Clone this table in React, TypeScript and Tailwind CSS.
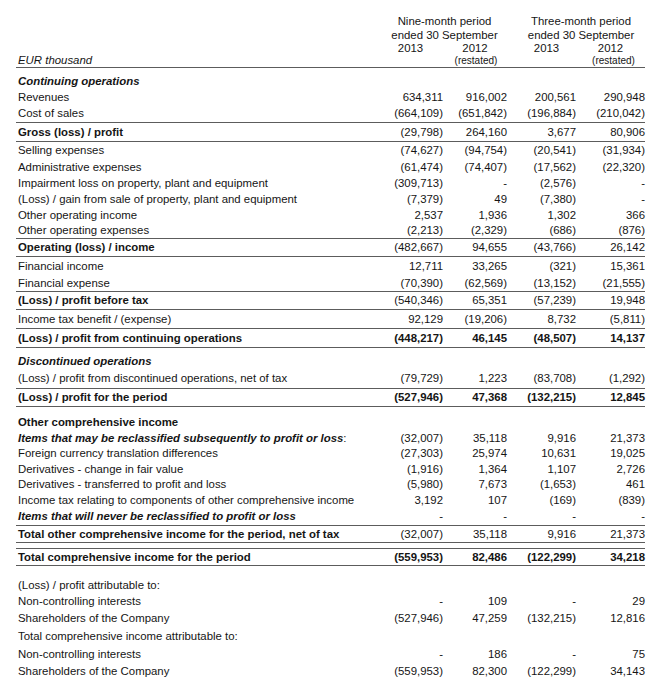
import React from "react";

const cols = ["w-[65px]", "w-[64px]", "w-[69px]", "w-[69px]"];

type RowProps = {
  label?: React.ReactNode;
  v?: string[];
  h: string;
  b?: boolean;
  lb?: string;
  nb?: boolean;
  mt?: string;
};

function Row({ label, v, h, b, lb, nb, mt }: RowProps) {
  return (
    <div
      className={[
        "flex items-center",
        h,
        b ? "border-b border-[#5c5c5c]" : "",
        mt ?? "",
      ].join(" ")}
    >
      <div className={["flex-1 pl-[2px] whitespace-nowrap", lb ?? ""].join(" ")}>{label}</div>
      {v &&
        v.map((x, i) => (
          <div
            key={i}
            className={[cols[i], "text-right whitespace-nowrap", nb ? "font-bold" : ""].join(" ")}
          >
            {x}
          </div>
        ))}
    </div>
  );
}

export default function App() {
  return (
    <div className="w-[652px] h-[683px] bg-white overflow-hidden text-[#151515] font-['Liberation_Sans',Arial,sans-serif] text-[11.4px] leading-[13px]">
      <div className="ml-[16px] w-[629px]">
        {/* Header */}
        <div className="flex h-[68px] border-b border-[#5c5c5c] pt-[14px]">
          <div className="flex-1 pl-[2px] flex items-end italic">EUR thousand</div>
          <div className="w-[129px] flex flex-col items-center">
            <div className="h-[14px] leading-[14px] pl-[4px]">Nine-month period</div>
            <div className="h-[14px] leading-[14px] pl-[4px]">ended 30 September</div>
            <div className="flex w-full h-[13px] leading-[13px]">
              <div className="w-[65px] text-center">2013</div>
              <div className="w-[64px] text-center">2012</div>
            </div>
            <div className="flex w-full h-[12px] leading-[12px]">
              <div className="w-[65px]"></div>
              <div className="w-[64px] text-center text-[10px] pl-[2px]">(restated)</div>
            </div>
          </div>
          <div className="w-[138px] flex flex-col items-center">
            <div className="h-[14px] leading-[14px] pl-[10px]">Three-month period</div>
            <div className="h-[14px] leading-[14px] pl-[10px]">ended 30 September</div>
            <div className="flex w-full h-[13px] leading-[13px]">
              <div className="w-[69px] text-center pl-[10px]">2013</div>
              <div className="w-[69px] text-center">2012</div>
            </div>
            <div className="flex w-full h-[12px] leading-[12px]">
              <div className="w-[69px]"></div>
              <div className="w-[69px] text-center text-[10px] pl-[6px]">(restated)</div>
            </div>
          </div>
        </div>

        <Row mt="mt-[5px]" h="h-[16px]" label="Continuing operations" lb="font-bold italic" />
        <Row h="h-[16px]" label="Revenues" v={["634,311", "916,002", "200,561", "290,948"]} />
        <Row h="h-[18px]" b label="Cost of sales" v={["(664,109)", "(651,842)", "(196,884)", "(210,042)"]} />
        <Row h="h-[19px]" b label="Gross (loss) / profit" lb="font-bold" v={["(29,798)", "264,160", "3,677", "80,906"]} />
        <Row h="h-[17px]" label="Selling expenses" v={["(74,627)", "(94,754)", "(20,541)", "(31,934)"]} />
        <Row h="h-[16px]" label="Administrative expenses" v={["(61,474)", "(74,407)", "(17,562)", "(22,320)"]} />
        <Row h="h-[16px]" label="Impairment loss on property, plant and equipment" v={["(309,713)", "-", "(2,576)", "-"]} />
        <Row h="h-[16px]" label="(Loss) / gain from sale of property, plant and equipment" v={["(7,379)", "49", "(7,380)", "-"]} />
        <Row h="h-[16px]" label="Other operating income" v={["2,537", "1,936", "1,302", "366"]} />
        <Row h="h-[16px]" b label="Other operating expenses" v={["(2,213)", "(2,329)", "(686)", "(876)"]} />
        <Row h="h-[18px]" b label="Operating (loss) / income" lb="font-bold" v={["(482,667)", "94,655", "(43,766)", "26,142"]} />
        <Row h="h-[19px]" label="Financial income" v={["12,711", "33,265", "(321)", "15,361"]} />
        <Row h="h-[16px]" b label="Financial expense" v={["(70,390)", "(62,569)", "(13,152)", "(21,555)"]} />
        <Row h="h-[18px]" b label="(Loss) / profit before tax" lb="font-bold" v={["(540,346)", "65,351", "(57,239)", "19,948"]} />
        <Row h="h-[19px]" b label="Income tax benefit / (expense)" v={["92,129", "(19,206)", "8,732", "(5,811)"]} />
        <Row h="h-[19px]" b label="(Loss) / profit from continuing operations" lb="font-bold" nb v={["(448,217)", "46,145", "(48,507)", "14,137"]} />

        <Row mt="mt-[5px]" h="h-[16px]" label="Discontinued operations" lb="font-bold italic" />
        <Row h="h-[20px]" b label="(Loss) / profit from discontinued operations, net of tax" v={["(79,729)", "1,223", "(83,708)", "(1,292)"]} />
        <Row h="h-[18px]" b label="(Loss) / profit for the period" lb="font-bold" nb v={["(527,946)", "47,368", "(132,215)", "12,845"]} />

        <Row mt="mt-[7px]" h="h-[16px]" label="Other comprehensive income" lb="font-bold" />
        <Row
          h="h-[16px]"
          label={
            <span>
              <span className="font-bold italic">Items that may be reclassified subsequently to profit or loss</span>:
            </span>
          }
          v={["(32,007)", "35,118", "9,916", "21,373"]}
        />
        <Row h="h-[15px]" label="Foreign currency translation differences" v={["(27,303)", "25,974", "10,631", "19,025"]} />
        <Row h="h-[16px]" label="Derivatives - change in fair value" v={["(1,916)", "1,364", "1,107", "2,726"]} />
        <Row h="h-[15px]" label="Derivatives - transferred to profit and loss" v={["(5,980)", "7,673", "(1,653)", "461"]} />
        <Row h="h-[16px]" label="Income tax relating to components of other comprehensive income" v={["3,192", "107", "(169)", "(839)"]} />
        <Row h="h-[18px]" b label="Items that will never be reclassified to profit or loss" lb="font-bold italic" v={["-", "-", "-", "-"]} />
        <Row h="h-[17px]" b label="Total other comprehensive income for the period, net of tax" lb="font-bold" v={["(32,007)", "35,118", "9,916", "21,373"]} />
        <div className="h-[6px] border-b border-[#5c5c5c]"></div>
        <Row h="h-[17px]" b label="Total comprehensive income for the period" lb="font-bold" nb v={["(559,953)", "82,486", "(122,299)", "34,218"]} />

        <Row mt="mt-[11px]" h="h-[16px]" label="(Loss) / profit attributable to:" />
        <Row h="h-[16px]" label="Non-controlling interests" v={["-", "109", "-", "29"]} />
        <Row h="h-[18px]" label="Shareholders of the Company" v={["(527,946)", "47,259", "(132,215)", "12,816"]} />
        <Row h="h-[18px]" label="Total comprehensive income attributable to:" />
        <Row h="h-[18px]" label="Non-controlling interests" v={["-", "186", "-", "75"]} />
        <Row h="h-[16px]" label="Shareholders of the Company" v={["(559,953)", "82,300", "(122,299)", "34,143"]} />
      </div>
    </div>
  );
}
